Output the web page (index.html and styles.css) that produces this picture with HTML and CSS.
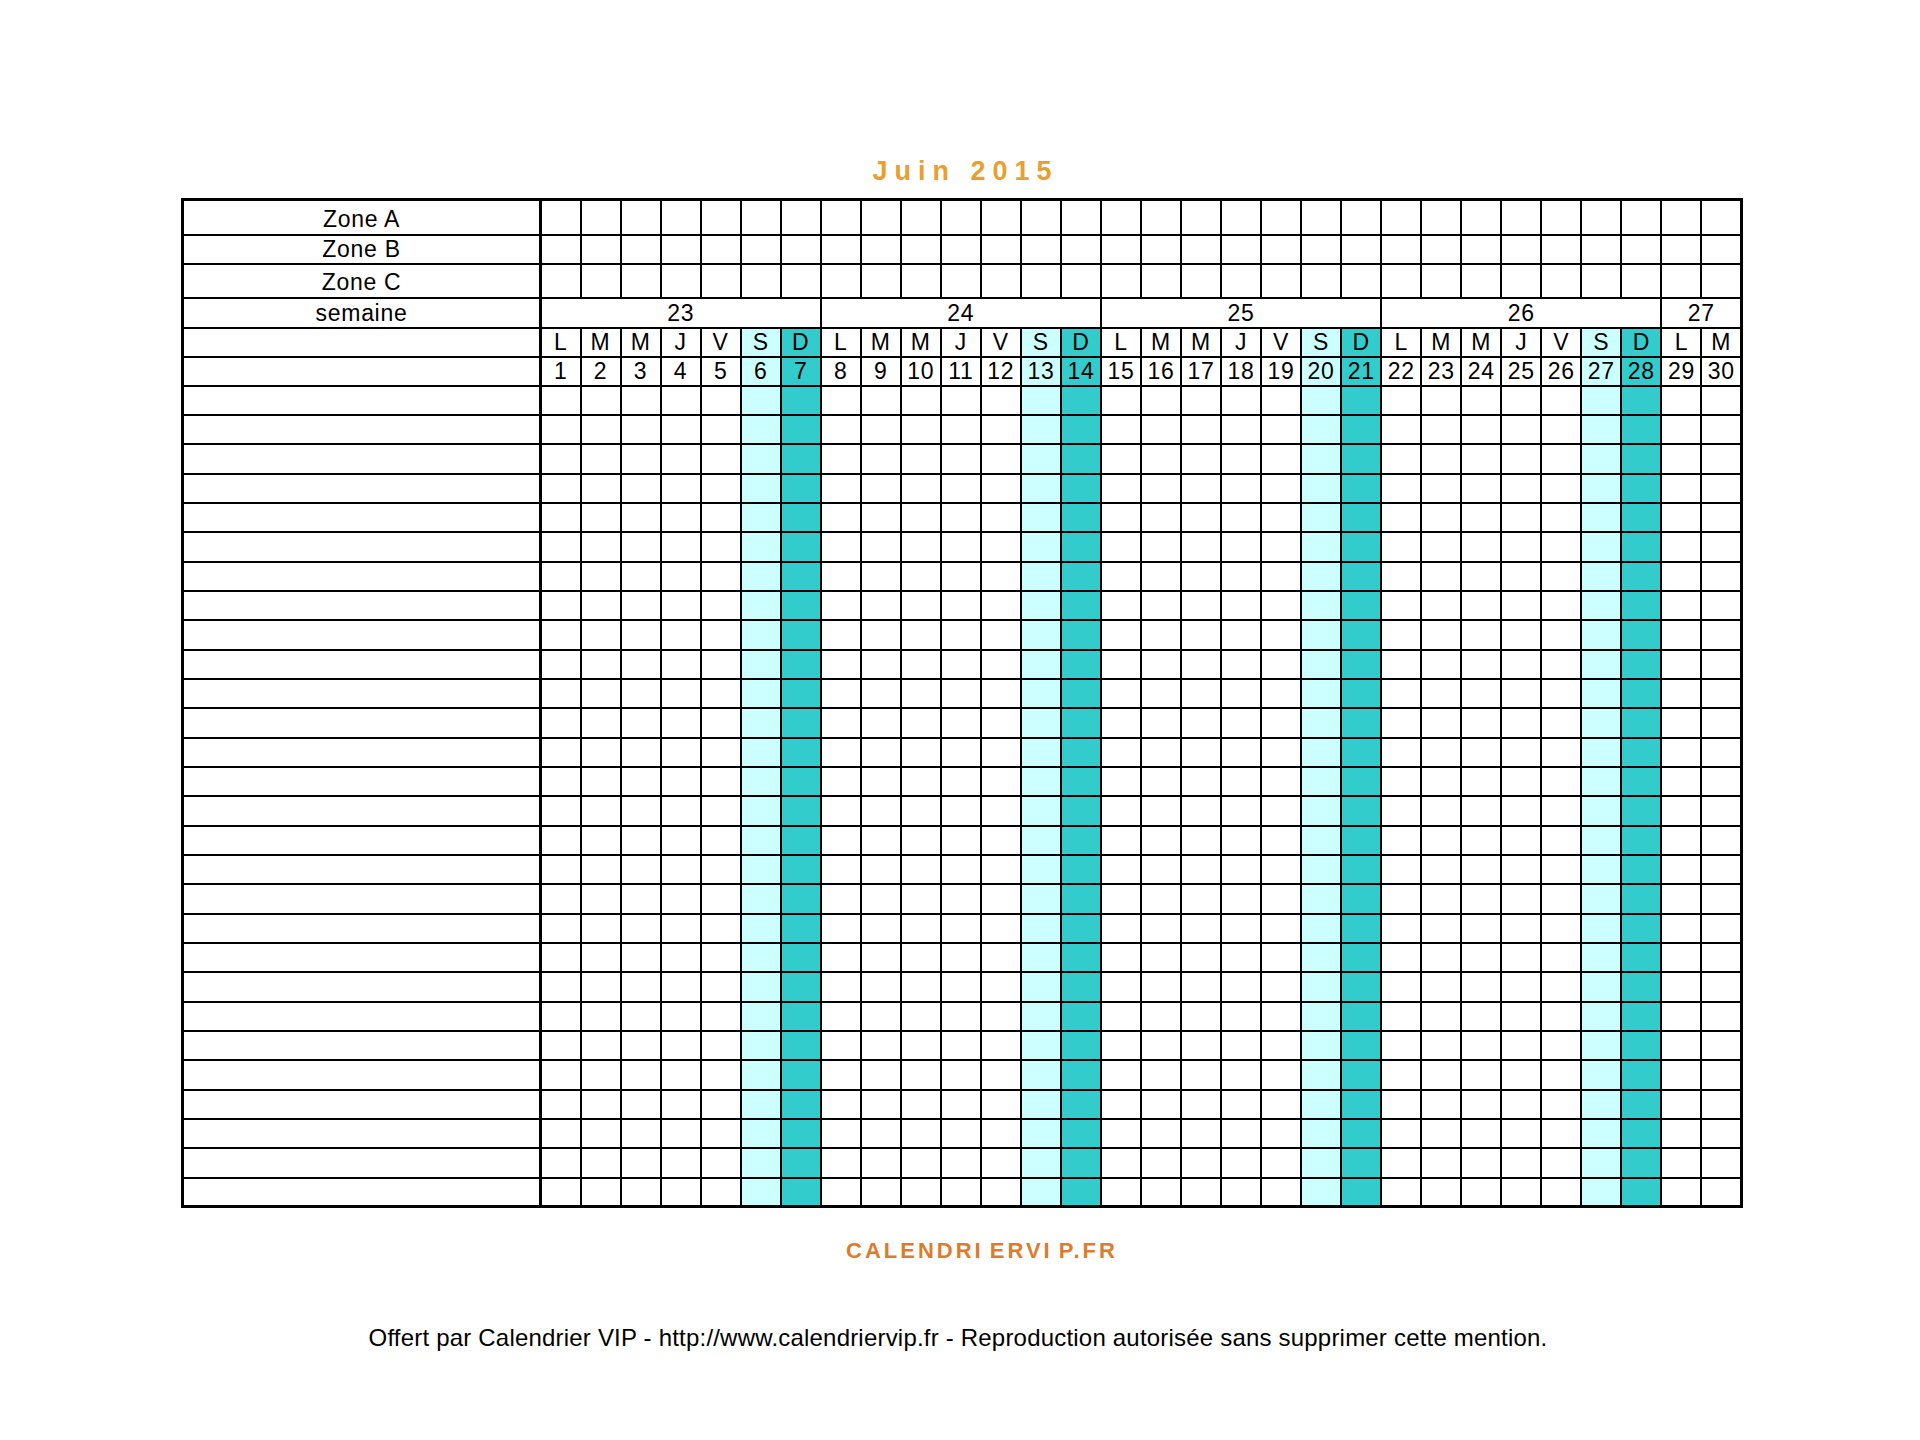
FILE: index.html
```html
<!DOCTYPE html>
<html lang="fr">
<head>
<meta charset="utf-8">
<title>Juin 2015</title>
<link rel="stylesheet" href="styles.css">
</head>
<body>
<div class="page">
  <h1 class="title">Juin 2015</h1>
  <table class="cal">
    <colgroup>
      <col class="c-label">
      <col><col><col><col><col><col class="sat"><col class="sun">
      <col><col><col><col><col><col class="sat"><col class="sun">
      <col><col><col><col><col><col class="sat"><col class="sun">
      <col><col><col><col><col><col class="sat"><col class="sun">
      <col><col>
    </colgroup>
    <tr class="zone za"><td class="label">Zone A</td><td></td><td></td><td></td><td></td><td></td><td></td><td></td><td></td><td></td><td></td><td></td><td></td><td></td><td></td><td></td><td></td><td></td><td></td><td></td><td></td><td></td><td></td><td></td><td></td><td></td><td></td><td></td><td></td><td></td><td></td></tr>
    <tr class="zone zb"><td class="label">Zone B</td><td></td><td></td><td></td><td></td><td></td><td></td><td></td><td></td><td></td><td></td><td></td><td></td><td></td><td></td><td></td><td></td><td></td><td></td><td></td><td></td><td></td><td></td><td></td><td></td><td></td><td></td><td></td><td></td><td></td><td></td></tr>
    <tr class="zone zc"><td class="label">Zone C</td><td></td><td></td><td></td><td></td><td></td><td></td><td></td><td></td><td></td><td></td><td></td><td></td><td></td><td></td><td></td><td></td><td></td><td></td><td></td><td></td><td></td><td></td><td></td><td></td><td></td><td></td><td></td><td></td><td></td><td></td></tr>
    <tr class="week"><td class="label">semaine</td><td colspan="7">23</td><td colspan="7">24</td><td colspan="7">25</td><td colspan="7">26</td><td colspan="2">27</td></tr>
    <tr class="days"><td class="label"></td><td>L</td><td>M</td><td>M</td><td>J</td><td>V</td><td>S</td><td>D</td><td>L</td><td>M</td><td>M</td><td>J</td><td>V</td><td>S</td><td>D</td><td>L</td><td>M</td><td>M</td><td>J</td><td>V</td><td>S</td><td>D</td><td>L</td><td>M</td><td>M</td><td>J</td><td>V</td><td>S</td><td>D</td><td>L</td><td>M</td></tr>
    <tr class="nums"><td class="label"></td><td>1</td><td>2</td><td>3</td><td>4</td><td>5</td><td>6</td><td>7</td><td>8</td><td>9</td><td>10</td><td>11</td><td>12</td><td>13</td><td>14</td><td>15</td><td>16</td><td>17</td><td>18</td><td>19</td><td>20</td><td>21</td><td>22</td><td>23</td><td>24</td><td>25</td><td>26</td><td>27</td><td>28</td><td>29</td><td>30</td></tr>
    <!-- data rows 1-4 -->
    <tr class="row"><td class="label"></td><td></td><td></td><td></td><td></td><td></td><td></td><td></td><td></td><td></td><td></td><td></td><td></td><td></td><td></td><td></td><td></td><td></td><td></td><td></td><td></td><td></td><td></td><td></td><td></td><td></td><td></td><td></td><td></td><td></td><td></td></tr>
    <tr class="row"><td class="label"></td><td></td><td></td><td></td><td></td><td></td><td></td><td></td><td></td><td></td><td></td><td></td><td></td><td></td><td></td><td></td><td></td><td></td><td></td><td></td><td></td><td></td><td></td><td></td><td></td><td></td><td></td><td></td><td></td><td></td><td></td></tr>
    <tr class="row"><td class="label"></td><td></td><td></td><td></td><td></td><td></td><td></td><td></td><td></td><td></td><td></td><td></td><td></td><td></td><td></td><td></td><td></td><td></td><td></td><td></td><td></td><td></td><td></td><td></td><td></td><td></td><td></td><td></td><td></td><td></td><td></td></tr>
    <tr class="row"><td class="label"></td><td></td><td></td><td></td><td></td><td></td><td></td><td></td><td></td><td></td><td></td><td></td><td></td><td></td><td></td><td></td><td></td><td></td><td></td><td></td><td></td><td></td><td></td><td></td><td></td><td></td><td></td><td></td><td></td><td></td><td></td></tr>
    <!-- data rows 5-8 -->
    <tr class="row"><td class="label"></td><td></td><td></td><td></td><td></td><td></td><td></td><td></td><td></td><td></td><td></td><td></td><td></td><td></td><td></td><td></td><td></td><td></td><td></td><td></td><td></td><td></td><td></td><td></td><td></td><td></td><td></td><td></td><td></td><td></td><td></td></tr>
    <tr class="row"><td class="label"></td><td></td><td></td><td></td><td></td><td></td><td></td><td></td><td></td><td></td><td></td><td></td><td></td><td></td><td></td><td></td><td></td><td></td><td></td><td></td><td></td><td></td><td></td><td></td><td></td><td></td><td></td><td></td><td></td><td></td><td></td></tr>
    <tr class="row"><td class="label"></td><td></td><td></td><td></td><td></td><td></td><td></td><td></td><td></td><td></td><td></td><td></td><td></td><td></td><td></td><td></td><td></td><td></td><td></td><td></td><td></td><td></td><td></td><td></td><td></td><td></td><td></td><td></td><td></td><td></td><td></td></tr>
    <tr class="row"><td class="label"></td><td></td><td></td><td></td><td></td><td></td><td></td><td></td><td></td><td></td><td></td><td></td><td></td><td></td><td></td><td></td><td></td><td></td><td></td><td></td><td></td><td></td><td></td><td></td><td></td><td></td><td></td><td></td><td></td><td></td><td></td></tr>
    <!-- data rows 9-12 -->
    <tr class="row"><td class="label"></td><td></td><td></td><td></td><td></td><td></td><td></td><td></td><td></td><td></td><td></td><td></td><td></td><td></td><td></td><td></td><td></td><td></td><td></td><td></td><td></td><td></td><td></td><td></td><td></td><td></td><td></td><td></td><td></td><td></td><td></td></tr>
    <tr class="row"><td class="label"></td><td></td><td></td><td></td><td></td><td></td><td></td><td></td><td></td><td></td><td></td><td></td><td></td><td></td><td></td><td></td><td></td><td></td><td></td><td></td><td></td><td></td><td></td><td></td><td></td><td></td><td></td><td></td><td></td><td></td><td></td></tr>
    <tr class="row"><td class="label"></td><td></td><td></td><td></td><td></td><td></td><td></td><td></td><td></td><td></td><td></td><td></td><td></td><td></td><td></td><td></td><td></td><td></td><td></td><td></td><td></td><td></td><td></td><td></td><td></td><td></td><td></td><td></td><td></td><td></td><td></td></tr>
    <tr class="row"><td class="label"></td><td></td><td></td><td></td><td></td><td></td><td></td><td></td><td></td><td></td><td></td><td></td><td></td><td></td><td></td><td></td><td></td><td></td><td></td><td></td><td></td><td></td><td></td><td></td><td></td><td></td><td></td><td></td><td></td><td></td><td></td></tr>
    <!-- data rows 13-16 -->
    <tr class="row"><td class="label"></td><td></td><td></td><td></td><td></td><td></td><td></td><td></td><td></td><td></td><td></td><td></td><td></td><td></td><td></td><td></td><td></td><td></td><td></td><td></td><td></td><td></td><td></td><td></td><td></td><td></td><td></td><td></td><td></td><td></td><td></td></tr>
    <tr class="row"><td class="label"></td><td></td><td></td><td></td><td></td><td></td><td></td><td></td><td></td><td></td><td></td><td></td><td></td><td></td><td></td><td></td><td></td><td></td><td></td><td></td><td></td><td></td><td></td><td></td><td></td><td></td><td></td><td></td><td></td><td></td><td></td></tr>
    <tr class="row"><td class="label"></td><td></td><td></td><td></td><td></td><td></td><td></td><td></td><td></td><td></td><td></td><td></td><td></td><td></td><td></td><td></td><td></td><td></td><td></td><td></td><td></td><td></td><td></td><td></td><td></td><td></td><td></td><td></td><td></td><td></td><td></td></tr>
    <tr class="row"><td class="label"></td><td></td><td></td><td></td><td></td><td></td><td></td><td></td><td></td><td></td><td></td><td></td><td></td><td></td><td></td><td></td><td></td><td></td><td></td><td></td><td></td><td></td><td></td><td></td><td></td><td></td><td></td><td></td><td></td><td></td><td></td></tr>
    <!-- data rows 17-20 -->
    <tr class="row"><td class="label"></td><td></td><td></td><td></td><td></td><td></td><td></td><td></td><td></td><td></td><td></td><td></td><td></td><td></td><td></td><td></td><td></td><td></td><td></td><td></td><td></td><td></td><td></td><td></td><td></td><td></td><td></td><td></td><td></td><td></td><td></td></tr>
    <tr class="row"><td class="label"></td><td></td><td></td><td></td><td></td><td></td><td></td><td></td><td></td><td></td><td></td><td></td><td></td><td></td><td></td><td></td><td></td><td></td><td></td><td></td><td></td><td></td><td></td><td></td><td></td><td></td><td></td><td></td><td></td><td></td><td></td></tr>
    <tr class="row"><td class="label"></td><td></td><td></td><td></td><td></td><td></td><td></td><td></td><td></td><td></td><td></td><td></td><td></td><td></td><td></td><td></td><td></td><td></td><td></td><td></td><td></td><td></td><td></td><td></td><td></td><td></td><td></td><td></td><td></td><td></td><td></td></tr>
    <tr class="row"><td class="label"></td><td></td><td></td><td></td><td></td><td></td><td></td><td></td><td></td><td></td><td></td><td></td><td></td><td></td><td></td><td></td><td></td><td></td><td></td><td></td><td></td><td></td><td></td><td></td><td></td><td></td><td></td><td></td><td></td><td></td><td></td></tr>
    <!-- data rows 21-24 -->
    <tr class="row"><td class="label"></td><td></td><td></td><td></td><td></td><td></td><td></td><td></td><td></td><td></td><td></td><td></td><td></td><td></td><td></td><td></td><td></td><td></td><td></td><td></td><td></td><td></td><td></td><td></td><td></td><td></td><td></td><td></td><td></td><td></td><td></td></tr>
    <tr class="row"><td class="label"></td><td></td><td></td><td></td><td></td><td></td><td></td><td></td><td></td><td></td><td></td><td></td><td></td><td></td><td></td><td></td><td></td><td></td><td></td><td></td><td></td><td></td><td></td><td></td><td></td><td></td><td></td><td></td><td></td><td></td><td></td></tr>
    <tr class="row"><td class="label"></td><td></td><td></td><td></td><td></td><td></td><td></td><td></td><td></td><td></td><td></td><td></td><td></td><td></td><td></td><td></td><td></td><td></td><td></td><td></td><td></td><td></td><td></td><td></td><td></td><td></td><td></td><td></td><td></td><td></td><td></td></tr>
    <tr class="row"><td class="label"></td><td></td><td></td><td></td><td></td><td></td><td></td><td></td><td></td><td></td><td></td><td></td><td></td><td></td><td></td><td></td><td></td><td></td><td></td><td></td><td></td><td></td><td></td><td></td><td></td><td></td><td></td><td></td><td></td><td></td><td></td></tr>
    <!-- data rows 25-28 -->
    <tr class="row"><td class="label"></td><td></td><td></td><td></td><td></td><td></td><td></td><td></td><td></td><td></td><td></td><td></td><td></td><td></td><td></td><td></td><td></td><td></td><td></td><td></td><td></td><td></td><td></td><td></td><td></td><td></td><td></td><td></td><td></td><td></td><td></td></tr>
    <tr class="row"><td class="label"></td><td></td><td></td><td></td><td></td><td></td><td></td><td></td><td></td><td></td><td></td><td></td><td></td><td></td><td></td><td></td><td></td><td></td><td></td><td></td><td></td><td></td><td></td><td></td><td></td><td></td><td></td><td></td><td></td><td></td><td></td></tr>
    <tr class="row"><td class="label"></td><td></td><td></td><td></td><td></td><td></td><td></td><td></td><td></td><td></td><td></td><td></td><td></td><td></td><td></td><td></td><td></td><td></td><td></td><td></td><td></td><td></td><td></td><td></td><td></td><td></td><td></td><td></td><td></td><td></td><td></td></tr>
    <tr class="row"><td class="label"></td><td></td><td></td><td></td><td></td><td></td><td></td><td></td><td></td><td></td><td></td><td></td><td></td><td></td><td></td><td></td><td></td><td></td><td></td><td></td><td></td><td></td><td></td><td></td><td></td><td></td><td></td><td></td><td></td><td></td><td></td></tr>
  </table>
  <p class="brand"><span class="g">CALENDRI</span><span class="g">ERVI</span>P.FR</p>
  <p class="credit">Offert par Calendrier VIP - http://www.calendriervip.fr - Reproduction autorisée sans supprimer cette mention.</p>
</div>
</body>
</html>
```

FILE: styles.css
```css
html, body {
  margin: 0;
  padding: 0;
  background: #ffffff;
}

body {
  font-family: "Liberation Sans", Arial, sans-serif;
  color: #000;
}

.page {
  width: 1562px;
  margin-left: 181px;
  padding-top: 157px;
}

.title {
  margin: 0 0 13px 0;
  height: 28px;
  line-height: 28px;
  font-size: 27px;
  font-weight: bold;
  color: #e99f2d;
  text-align: center;
  letter-spacing: 7px;
  text-indent: 7px;
}

.cal {
  width: 1562px;
  table-layout: fixed;
  border-collapse: collapse;
  border: 3px solid #000;
  font-size: 23px;
  letter-spacing: 0.7px;
}

.c-label {
  width: 358px;
}

.sat {
  background: #ccffff;
}

.sun {
  background: #33cccc;
}

.cal td {
  border: 2px solid #000;
  padding: 0;
  text-align: center;
  vertical-align: middle;
  line-height: 22px;
  white-space: nowrap;
  overflow: hidden;
}

.cal td.label {
  border-right-width: 3px;
  background: #fff;
}

.zone td,
.week td {
  background: #fff;
}

.za { height: 35px; }
.za td { padding-top: 3px; }
.zb { height: 29px; }
.zc { height: 34px; }
.zc td { padding-top: 3px; }
.week { height: 30px; }
.days { height: 29px; }
.nums { height: 29px; }
.row { height: 29px; }
.row:nth-child(3n) { height: 30px; }

.brand {
  margin: 30px 0 0 0;
  padding-left: 40px;
  height: 26px;
  line-height: 26px;
  font-size: 22px;
  font-weight: bold;
  color: #df7b2c;
  text-align: center;
  letter-spacing: 3px;
}

.brand .g {
  margin-right: 6px;
}

.credit {
  margin: 60px 0 0 -8px;
  height: 28px;
  line-height: 28px;
  font-size: 24px;
  text-align: center;
  letter-spacing: 0.2px;
}
```
